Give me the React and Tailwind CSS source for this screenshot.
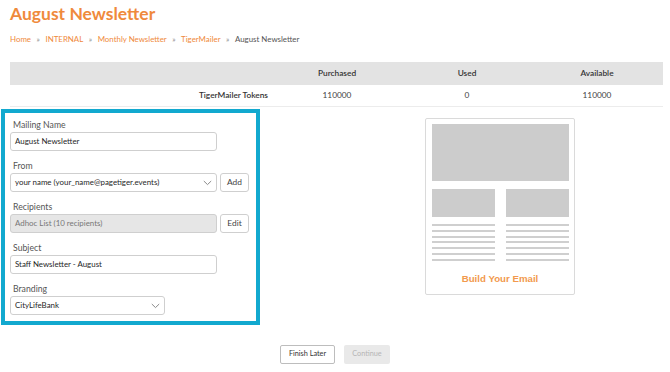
import React from 'react'

const Chevron = () => (
  <svg width="9" height="6" viewBox="0 0 9 6" fill="none" className="shrink-0">
    <path d="M0.8 1 L4.5 4.6 L8.2 1" stroke="#8a8a8a" strokeWidth="1" />
  </svg>
)

const Field = ({ label, children, first }) => (
  <div className={first ? "" : "mt-[9px]"}>
    <div className="h-[12px] pl-[3px] text-[8.7px] leading-[12px] text-[#555]">{label}</div>
    <div className="mt-[1px] flex gap-[3px]">{children}</div>
  </div>
)

const inputCls = "flex h-[19px] items-center rounded-[3px] border border-[#cfcfcf] px-[4px] text-[7.9px] text-[#1f1f1f]"
const btnCls = "flex h-[19px] w-[29px] items-center justify-center rounded-[3px] border border-[#cfcfcf] bg-white text-[8.4px] text-[#444]"

const App = () => {
  const crumbs = ["Home", "INTERNAL", "Monthly Newsletter", "TigerMailer"]

  return (
    <main className="min-h-[372px] bg-white px-[10px] font-['Lato',sans-serif]">
      <h1 className="pt-[1px] text-[17.5px] font-bold leading-[26px] text-[#ef8a3c]">August Newsletter</h1>

      <nav className="mt-[6px] flex items-center text-[7.9px] leading-[12px]">
        {crumbs.map((c) => (
          <React.Fragment key={c}>
            <span className="text-[#ef8a3c]">{c}</span>
            <span className="px-[5.5px] text-[#888]">»</span>
          </React.Fragment>
        ))}
        <span className="text-[#555]">August Newsletter</span>
      </nav>

      <div className="mt-[17px] w-[653px] text-[8.3px] text-[#444]">
        <div className="flex h-[23px] items-center bg-[#e3e3e3] font-semibold text-[#333]">
          <div className="w-[262px]" />
          <div className="w-[130px] text-center">Purchased</div>
          <div className="w-[130px] text-center">Used</div>
          <div className="w-[130px] text-center">Available</div>
        </div>
        <div className="flex h-[22px] items-center border-b border-[#ececec]">
          <div className="w-[262px] pr-[4px] text-right font-semibold text-[#333]">TigerMailer Tokens</div>
          <div className="w-[130px] text-center">110000</div>
          <div className="w-[130px] text-center">0</div>
          <div className="w-[130px] text-center">110000</div>
        </div>
      </div>

      <div className="flex">
        <div className="ml-[-9px] mt-[2px] w-[259px] border-[4px] border-[#12a9cf] pb-[6px] pl-[5px] pt-[6px]">
          <Field label="Mailing Name" first>
            <div className={`${inputCls} w-[207px]`}>August Newsletter</div>
          </Field>
          <Field label="From">
            <div className={`${inputCls} w-[207px] justify-between pr-[4px]`}>
              <span>your name (your_name@pagetiger.events)</span>
              <Chevron />
            </div>
            <div className={btnCls}>Add</div>
          </Field>
          <Field label="Recipients">
            <div className={`${inputCls} w-[207px] bg-[#e6e6e6] text-[#777]`}>Adhoc List (10 recipients)</div>
            <div className={btnCls}>Edit</div>
          </Field>
          <Field label="Subject">
            <div className={`${inputCls} w-[207px]`}>Staff Newsletter - August</div>
          </Field>
          <Field label="Branding">
            <div className={`${inputCls} w-[155px] justify-between pr-[4px]`}>
              <span>CityLifeBank</span>
              <Chevron />
            </div>
          </Field>
        </div>

        <div className="flex flex-1 justify-center pl-[79px] pt-[11px]">
          <div className="h-[177px] w-[150px] shrink-0 rounded-[2px] border border-[#dadada] pl-[6px] pr-[5px] pt-[5px]">
            <div className="h-[57px] bg-[#cccccc]" />
            <div className="mt-[8px] flex justify-between">
              {[0, 1].map((i) => (
                <div key={i} className="w-[63px]">
                  <div className="h-[28px] bg-[#cccccc]" />
                  <div className="mt-[7px] flex flex-col gap-[3.8px]">
                    {[0, 1, 2, 3, 4, 5, 6].map((j) => (
                      <div key={j} className="h-[2px] bg-[#cfcfcf]" />
                    ))}
                  </div>
                </div>
              ))}
            </div>
            <div className="mt-[11px] text-center font-['Liberation_Sans',sans-serif] text-[9.7px] font-bold text-[#f29a4e]">
              Build Your Email
            </div>
          </div>
        </div>
      </div>

      <div className="mt-[20px] flex justify-center gap-[9px] text-[7.3px]">
        <div className="flex h-[19px] w-[55px] items-center justify-center rounded-[2px] border border-[#bdbdbd] text-[#333]">
          Finish Later
        </div>
        <div className="flex h-[19px] w-[46px] items-center justify-center rounded-[2px] bg-[#e9e9e9] text-[#b5b5b5]">
          Continue
        </div>
      </div>
    </main>
  )
}

export default App
